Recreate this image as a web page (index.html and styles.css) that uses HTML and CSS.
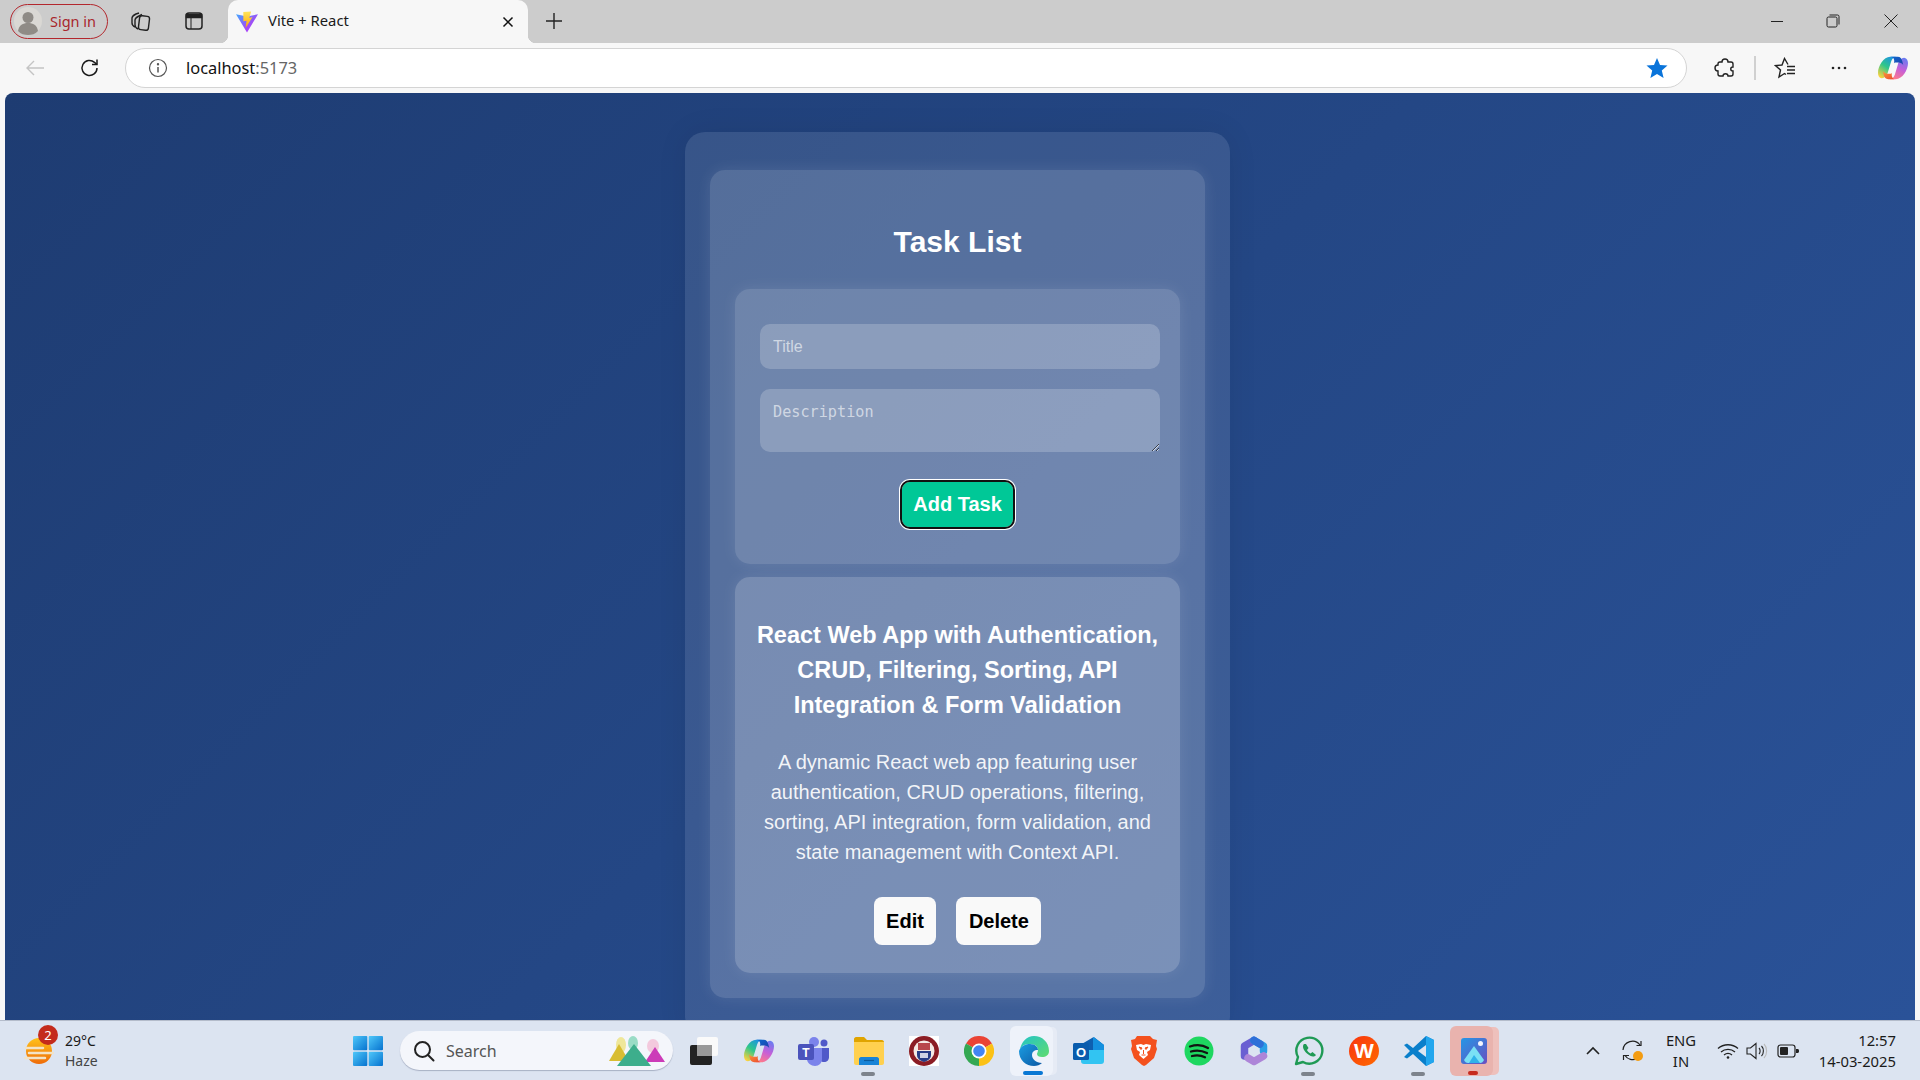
FILE: index.html
```html
<!DOCTYPE html>
<html lang="en">
<head>
    <meta charset="UTF-8">
    <meta name="viewport" content="width=device-width, initial-scale=1.0">
    <title>Vite + React</title>
    <link rel="stylesheet" href="styles.css">
</head>
<body>
    <!-- shared gradients and repeated icons -->
    <svg class="defs" aria-hidden="true">
        <defs>
            <linearGradient id="viteBody" x1="0" y1="0" x2="1" y2="1"><stop offset="0" stop-color="#41a8ff"/><stop offset=".6" stop-color="#a04cf6"/><stop offset="1" stop-color="#bd34fe"/></linearGradient>
            <linearGradient id="viteBolt" x1="0" y1="0" x2="0" y2="1"><stop offset="0" stop-color="#ffe45c"/><stop offset="1" stop-color="#ffa800"/></linearGradient>
            <linearGradient id="copA" x1="0.8" y1="0" x2="0.2" y2="1"><stop offset="0" stop-color="#1b8fe8"/><stop offset=".5" stop-color="#2fc78a"/><stop offset="1" stop-color="#ffd23c"/></linearGradient>
            <linearGradient id="copB" x1="0.7" y1="0" x2="0.3" y2="1"><stop offset="0" stop-color="#6c7bf0"/><stop offset=".5" stop-color="#c65fd8"/><stop offset="1" stop-color="#ff7a8a"/></linearGradient>
            <linearGradient id="copC" x1="0" y1="0" x2="1" y2="1"><stop offset="0" stop-color="#0f6ad0"/><stop offset="1" stop-color="#1b3fa8"/></linearGradient>
            <linearGradient id="copD" x1="0" y1="0" x2="1" y2="1"><stop offset="0" stop-color="#ff9a3c"/><stop offset="1" stop-color="#e8462f"/></linearGradient>
            <linearGradient id="startFill" x1="0" y1="0" x2="1" y2="1"><stop offset="0" stop-color="#4fc8fa"/><stop offset="1" stop-color="#0672cf"/></linearGradient>
            <linearGradient id="edgeFill" x1="0" y1="0" x2="1" y2="1"><stop offset="0" stop-color="#22c3c8"/><stop offset="1" stop-color="#5fdc6f"/></linearGradient>
            <linearGradient id="edgeBlue" x1="0" y1="0" x2="1" y2="1"><stop offset="0" stop-color="#1b9de2"/><stop offset="1" stop-color="#0c59a4"/></linearGradient>
            <linearGradient id="photoBg" x1="0" y1="0" x2="1" y2="1"><stop offset="0" stop-color="#2497e6"/><stop offset="1" stop-color="#6a4fc0"/></linearGradient>
            <linearGradient id="wpsFill" x1="0" y1="0" x2="1" y2="1"><stop offset="0" stop-color="#f8340f"/><stop offset="1" stop-color="#ff6a00"/></linearGradient>
            <linearGradient id="sunFill" x1="0" y1="0" x2="0" y2="1"><stop offset="0" stop-color="#ffc21a"/><stop offset="1" stop-color="#ef6c0a"/></linearGradient>
            <symbol id="copilot" viewBox="0 0 32 32">
                <path d="M13 4h7c-3 0-5 2-6 5l-3 10c-1 4-3 8-7 8-3-.5-4-3-4-6C0 14 6 4 13 4z" fill="url(#copA)"/>
                <path d="M19 28h-7c3 0 5-2 6-5l3-10c1-4 3-8 7-8 3 .5 4 3 4 6 0 7-6 17-13 17z" fill="url(#copB)"/>
                <path d="M13 4h8c3 0 4 2 5 5l1 4c-1-2-3-3-5-3h-4l-1 1c1-3 0-7-4-7z" fill="url(#copC)"/>
                <path d="M19 28h-8c-3 0-4-2-5-5l-1-4c1 2 3 3 5 3h4l1-1c-1 3 0 7 4 7z" fill="url(#copD)"/>
            </symbol>
        </defs>
    </svg>

    <div class="tabstrip">
        <div class="signin">
            <svg class="avatar" viewBox="0 0 28 28"><circle cx="14" cy="14" r="14" fill="#dad8d4"/><circle cx="14" cy="10.500" r="5.500" fill="#8f8b86"/><path d="M4 24c1-6 5-8 10-8s9 2 10 8c-3 3-6 4-10 4s-7-1-10-4z" fill="#8f8b86"/></svg>
            <span>Sign in</span>
        </div>
        <button class="chrome-btn collections" aria-label="Collections">
            <svg width="24" height="24" viewBox="0 0 24 24" fill="none" stroke="#222" stroke-width="1.400"><path d="M6 18c-2-1-3-2-3-4V9c0-2 2-3 4-4l3-1"/><path d="M9 20c-2-1-3-2-3-4v-5c0-2 2-3 4-4l3-1.500"/><rect x="10" y="7" width="10" height="14" rx="2.500" transform="rotate(7 15 14)"/></svg>
        </button>
        <button class="chrome-btn vertical-tabs" aria-label="Vertical tabs">
            <svg width="20" height="20" viewBox="0 0 20 20" fill="none" stroke="#222" stroke-width="1.500"><rect x="2" y="2" width="16" height="16" rx="3"/><path d="M2.500 3.500h15v3h-15z" fill="#222"/><path d="M7 6v12" stroke-width="1"/></svg>
        </button>
        <div class="tab">
            <svg class="favicon" viewBox="0 0 24 24"><path d="M0 3.500l12 2.500 12-2.500-12 20z" fill="url(#viteBody)"/><path d="M8 1l8.500-.5-2 7 3.500-1-7.500 12 1-8-3.500.8z" fill="url(#viteBolt)"/></svg>
            <span class="tab-title">Vite + React</span>
            <svg class="tab-close" width="12" height="12" viewBox="0 0 12 12" stroke="#111" stroke-width="1.500"><path d="M1.500 1.500l9 9M10.500 1.500l-9 9"/></svg>
        </div>
        <button class="chrome-btn new-tab" aria-label="New tab">
            <svg width="18" height="18" viewBox="0 0 18 18" stroke="#222" stroke-width="1.400"><path d="M9 1v16M1 9h16"/></svg>
        </button>
        <div class="window-controls">
            <button class="win-btn" aria-label="Minimize"><svg width="14" height="14" viewBox="0 0 14 14" stroke="#222"><path d="M1 7.500h12"/></svg></button>
            <button class="win-btn" aria-label="Restore"><svg width="14" height="14" viewBox="0 0 14 14" fill="none" stroke="#222"><rect x="1" y="3" width="10" height="10" rx="1.500"/><path d="M3.500 1h8A1.500 1.500 0 0 1 13 2.500v8"/></svg></button>
            <button class="win-btn win-close" aria-label="Close"><svg width="14" height="14" viewBox="0 0 14 14" stroke="#222"><path d="M.5.5l13 13M13.500.5l-13 13"/></svg></button>
        </div>
    </div>

    <div class="toolbar">
        <button class="tool-btn" aria-label="Back">
            <svg width="20" height="20" viewBox="0 0 20 20" fill="none" stroke="#c4c4c4" stroke-width="1.400"><path d="M19 10H2M9 3l-7 7 7 7"/></svg>
        </button>
        <button class="tool-btn reload" aria-label="Refresh">
            <svg width="22" height="22" viewBox="0 0 22 22" fill="none" stroke="#1a1a1a" stroke-width="1.500"><path d="M18 11a7.500 7.500 0 1 1-2.500-5.600L18 7.500"/><path d="M18 2.500v5h-5"/></svg>
        </button>
        <div class="address">
            <svg class="info" width="20" height="20" viewBox="0 0 20 20" fill="none" stroke="#555" stroke-width="1.200"><circle cx="10" cy="10" r="8.500"/><path d="M10 9v5.500" stroke-width="1.500"/><circle cx="10" cy="6.300" r=".6" fill="#555"/></svg>
            <span class="url">localhost<span class="url-port">:5173</span></span>
            <svg class="star" width="22" height="22" viewBox="0 0 22 22"><path d="M11 1l3 7 7.500.6-5.700 4.900 1.800 7.400L11 16.900l-6.600 4 1.800-7.400L.5 8.600 8 8z" fill="#0a74da"/></svg>
        </div>
        <button class="tool-btn ext" aria-label="Extensions">
            <svg width="22" height="22" viewBox="0 0 22 22" fill="none" stroke="#222" stroke-width="1.400"><path d="M8 5c0-4 6-4 6 0h3c1 0 2 1 2 2v3c-3 0-3 4 0 4v3c0 1-1 2-2 2h-3c0-3-5-3-5 0H6c-1 0-2-1-2-2v-3c-4 0-4-6 0-6V7c0-1 1-2 2-2z"/></svg>
        </button>
        <span class="tool-divider"></span>
        <button class="tool-btn" aria-label="Favorites">
            <svg width="22" height="22" viewBox="0 0 22 22" fill="none" stroke="#222" stroke-width="1.400"><path d="M14 7.500L10.500 1.500 8 8l-6.500.6 5 4.400L5 20l5.500-3.500 1.500 1"/><path d="M13 9.500h8M13 13h8M13 16.500h8"/></svg>
        </button>
        <button class="tool-btn dots" aria-label="Settings and more">
            <svg width="16" height="4" viewBox="0 0 16 4" fill="#222"><circle cx="2" cy="2" r="1.300"/><circle cx="8" cy="2" r="1.300"/><circle cx="14" cy="2" r="1.300"/></svg>
        </button>
        <button class="tool-btn copilot-btn" aria-label="Copilot"><svg width="30" height="30"><use href="#copilot"/></svg></button>
    </div>

    <main class="viewport">
        <div class="shell">
            <section class="task-panel">
                <h1 class="panel-title">Task List</h1>

                <form class="task-form">
                    <input class="field" type="text" placeholder="Title">
                    <textarea class="field field-area" placeholder="Description"></textarea>
                    <button class="add-btn" type="button">Add Task</button>
                </form>

                <article class="task-card">
                    <h3 class="task-name">React Web App with Authentication, CRUD, Filtering, Sorting, API Integration &amp; Form Validation</h3>
                    <p class="task-desc">A dynamic React web app featuring user authentication, CRUD operations, filtering, sorting, API integration, form validation, and state management with Context API.</p>
                    <div class="task-actions">
                        <button class="action-btn" type="button">Edit</button>
                        <button class="action-btn" type="button">Delete</button>
                    </div>
                </article>
            </section>
        </div>
    </main>

    <footer class="taskbar">
        <div class="weather">
            <svg class="weather-icon" width="30" height="32" viewBox="0 0 30 32">
                <circle cx="15" cy="16" r="13" fill="url(#sunFill)"/>
                <path d="M2 13h17M5 18h24M1 23h20" stroke="#f3e3c6" stroke-width="2.500" stroke-linecap="round"/>
            </svg>
            <span class="weather-badge">2</span>
            <div class="weather-text">
                <span>29°C</span>
                <span class="weather-sub">Haze</span>
            </div>
        </div>

        <div class="app-slot">
            <svg width="30" height="30" viewBox="0 0 30 30" fill="url(#startFill)"><rect x="0" y="0" width="14.300" height="14.300" rx="1"/><rect x="15.700" y="0" width="14.300" height="14.300" rx="1"/><rect x="0" y="15.700" width="14.300" height="14.300" rx="1"/><rect x="15.700" y="15.700" width="14.300" height="14.300" rx="1"/></svg>
        </div>

        <div class="search">
            <svg width="22" height="22" viewBox="0 0 22 22" fill="none" stroke="#222" stroke-width="2"><circle cx="9.500" cy="9.500" r="7.500"/><path d="M15 15l5.500 5.500" stroke-linecap="round"/></svg>
            <span class="search-label">Search</span>
            <svg class="search-art" width="60" height="32" viewBox="0 0 60 32">
                <ellipse cx="14" cy="10" rx="5" ry="8" fill="#efe79a"/>
                <path d="M2 26L12 9l10 17z" fill="#d8bd32"/>
                <ellipse cx="46" cy="11" rx="6" ry="7" fill="#f3c9dd"/>
                <path d="M38 27l10-15 10 15z" fill="#cc3bb8"/>
                <ellipse cx="26" cy="8" rx="5" ry="7" fill="#9adcc6"/>
                <path d="M10 31L27 9l17 22z" fill="#3dae8c"/>
            </svg>
        </div>

        <div class="app-slot">
            <svg width="30" height="30" viewBox="0 0 30 30"><rect x="1" y="9" width="22" height="20" rx="2" fill="#222"/><rect x="8" y="1" width="21" height="19" rx="2" fill="#fafafa"/><rect x="8" y="9" width="15" height="11" fill="#999"/></svg>
        </div>
        <div class="app-slot"><svg width="30" height="30"><use href="#copilot"/></svg></div>
        <div class="app-slot">
            <svg width="32" height="30" viewBox="0 0 32 30">
                <circle cx="16" cy="6" r="5" fill="#7b83eb"/><circle cx="26" cy="7" r="3.500" fill="#5059c9"/>
                <path d="M21 12h10v9c0 3-2 5-5 5s-5-2-5-5z" fill="#5059c9"/>
                <path d="M9 12h15v11c0 4-3 7-7 7s-8-3-8-7z" fill="#7b83eb"/>
                <rect x="0" y="8" width="16" height="16" rx="2" fill="#4b53bc"/>
                <text class="icon-letter" x="8" y="21" font-size="12" text-anchor="middle">T</text>
            </svg>
        </div>
        <div class="app-slot has-dot">
            <svg width="30" height="28" viewBox="0 0 30 28">
                <path d="M0 2c0-1 1-2 2-2h8l3 3h15c1 0 2 1 2 2v3H0z" fill="#e0a400"/>
                <path d="M0 5h30v21c0 1-1 2-2 2H2c-1 0-2-1-2-2z" fill="#ffd04f"/>
                <path d="M5 22c0-1 1-2 2-2h16c1 0 2 1 2 2v6H5z" fill="#1883d7"/>
                <path d="M10 23.500h10" stroke="#0b5a9c" stroke-width="1.200"/>
            </svg>
        </div>
        <div class="app-slot">
            <svg width="30" height="30" viewBox="0 0 30 30">
                <rect width="30" height="30" fill="#fff"/>
                <circle cx="15" cy="15" r="15" fill="#8b1c24"/>
                <circle cx="15" cy="15" r="10.500" fill="#f4e9e4"/>
                <path d="M9 7h12v7H9z" fill="#b8474c"/>
                <path d="M8 15h14v4c0 4-4 6-7 7-3-1-7-3-7-7z" fill="#273c86"/>
                <path d="M11 17h8v5h-8z" fill="#cfd2e4"/>
            </svg>
        </div>
        <div class="app-slot">
            <svg width="30" height="30" viewBox="0 0 30 30">
                <path d="M15 15L2 7.500A15 15 0 0 1 28 7.500z" fill="#ea4335"/>
                <path d="M15 15L28 7.500A15 15 0 0 1 15 30z" fill="#fbc116"/>
                <path d="M15 15L15 30A15 15 0 0 1 2 7.500z" fill="#34a853"/>
                <circle cx="15" cy="15" r="7.500" fill="#fff"/><circle cx="15" cy="15" r="5.800" fill="#4285f4"/>
            </svg>
        </div>
        <div class="app-slot slot-edge">
            <svg width="30" height="30" viewBox="0 0 30 30">
                <path d="M1 14C2 6 8 0 15 0c8 0 15 6 15 15 0 4-3 6-7 6-3 0-5-1-5-3 0-1 1-2 1-4 0-4-4-6-8-6C6 8 2 10 1 14z" fill="url(#edgeFill)"/>
                <path d="M0 15c2-5 6-7 11-7 5 0 8 3 8 6-4 0-6 2-6 5 0 4 4 8 10 8-2 2-5 3-8 3C7 30 0 24 0 15z" fill="url(#edgeBlue)"/>
            </svg>
        </div>
        <div class="app-slot">
            <svg width="31" height="28" viewBox="0 0 31 28">
                <path d="M7 8l12-7c1-.6 2-.6 3 0l9 7v5H7z" fill="#0e5fb0"/>
                <path d="M20 .5c1-.3 1.500-.2 2 .5l9 7v5H20z" fill="#1490df"/>
                <path d="M8 13h23v11c0 2-1 3-3 3H11c-2 0-3-1-3-3z" fill="#32c4f2"/>
                <rect x="0" y="6" width="16" height="17" rx="1.500" fill="#0a5cad"/>
                <text class="icon-letter" x="8" y="19.500" font-size="13" text-anchor="middle">O</text>
            </svg>
        </div>
        <div class="app-slot">
            <svg width="27" height="30" viewBox="0 0 27 30">
                <path d="M7 0h13l3 3 4 1-1 6 1 3-3 9-8 7-2 1-2-1-8-7-3-9 1-3-1-6 4-1z" fill="#f4511e"/>
                <path d="M6 9l5-1 2.500 1 2.500-1 5 1-1 5-3 2 1 3-4.500 4L9 19l1-3-3-2z" fill="#fff"/>
                <path d="M9 11l3 1-1 1.500zM18 11l-3 1 1 1.500zM13.500 14v4M11.500 19h4" stroke="#f4511e" stroke-width="1" fill="#f4511e"/>
            </svg>
        </div>
        <div class="app-slot">
            <svg width="30" height="30" viewBox="0 0 30 30">
                <circle cx="15" cy="15" r="14.500" fill="#1ed760"/>
                <path d="M6 10.500c6-2 13-1.500 18 1.500M7 15.500c5-1.500 11-1 16 1.500M8 20c4-1 9-.8 13 1.300" fill="none" stroke="#121212" stroke-width="2.300" stroke-linecap="round"/>
            </svg>
        </div>
        <div class="app-slot">
            <svg width="28" height="30" viewBox="0 0 28 30" fill="none" stroke-width="7.500" stroke-linejoin="round" stroke-linecap="round">
                <path d="M4.500 20V10l9.500-5.500" stroke="#6a5fd2"/>
                <path d="M14 4.500l9.500 5.500v5" stroke="#2a9ee6"/>
                <path d="M23.500 20l-9.500 5.500L8 22" stroke="#ad85d8"/>
                <path d="M14 4.500l6 3.500" stroke="#2e6fd8"/>
            </svg>
        </div>
        <div class="app-slot has-dot">
            <svg width="30" height="30" viewBox="0 0 30 30" fill="none">
                <path d="M2 28l2-7A13 13 0 1 1 9 26z" stroke="#1f9a55" stroke-width="2.400" stroke-linejoin="round"/>
                <path d="M10 8c-2 2-1 6 3 9.500s7 4 9 1.500l-3.500-3-2 1.500c-1.500-.7-3-2.300-3.500-3.500l1.500-2L12 8z" fill="#1f9a55"/>
            </svg>
        </div>
        <div class="app-slot">
            <svg width="30" height="30" viewBox="0 0 30 30">
                <circle cx="15" cy="15" r="15" fill="url(#wpsFill)"/>
                <text class="icon-letter" x="15" y="22" font-size="21" text-anchor="middle">W</text>
            </svg>
        </div>
        <div class="app-slot has-dot">
            <svg width="30" height="30" viewBox="0 0 30 30">
                <path d="M22 0l8 4v22l-8 4-13-12-6 4.500L0 21l6-6-6-6 3-1.500 6 4.500z" fill="#0a7fcb"/>
                <path d="M22 0l8 4v22l-8 4z" fill="#22a6ee"/>
                <path d="M22 9l-8 6 8 6z" fill="#dde5f2"/>
            </svg>
        </div>
        <div class="app-slot slot-photos">
            <svg width="26" height="26" viewBox="0 0 26 26">
                <rect width="26" height="26" rx="3" fill="url(#photoBg)"/>
                <circle cx="19.500" cy="5.500" r="2.500" fill="#f2f4ff"/>
                <path d="M3 22L13 8l10 14c-1 2-2 3-4 3H7c-2 0-3-1-4-3z" fill="#7ae0f5"/>
                <path d="M8 25l5-8 6 8z" fill="#2fb2ea"/>
            </svg>
        </div>

        <div class="tray">
            <span class="tray-slot tray-caret">
                <svg width="16" height="10" viewBox="0 0 16 10" fill="none" stroke="#222" stroke-width="1.600"><path d="M2 8l6-6 6 6"/></svg>
            </span>
            <span class="tray-slot tray-sync">
                <svg width="24" height="24" viewBox="0 0 24 24" fill="none" stroke="#222" stroke-width="1.200"><path d="M2 11A9.500 9.500 0 0 1 19 6"/><path d="M20 2v4.500h-4.500"/><path d="M16 19.500A9 9 0 0 1 4 16.500"/><path d="M2.500 21v-4.500H8"/><circle cx="17" cy="17" r="5" fill="#f39c12" stroke="none"/></svg>
            </span>
            <span class="tray-lang"><span>ENG</span><span>IN</span></span>
            <span class="tray-slot tray-wifi">
                <svg width="22" height="18" viewBox="0 0 22 18" fill="none" stroke="#222" stroke-width="1.300"><path d="M1 6.500c5.500-5 14.500-5 20 0M4 10c4-3.500 10-3.500 14 0M7 13c2.500-2 5.500-2 8 0"/><circle cx="11" cy="15.500" r="1.300" fill="#222" stroke="none"/></svg>
            </span>
            <span class="tray-slot">
                <svg width="22" height="18" viewBox="0 0 22 18" fill="none" stroke="#222" stroke-width="1.100"><path d="M1 6h3.500L10 1.500v15L4.500 12H1z"/><path d="M13 6c1.500 1.500 1.500 4.500 0 6M15.500 4c2.500 2.500 2.500 7.500 0 10"/><path d="M18 2c3.500 3.500 3.500 10.500 0 14" stroke="#bbb"/></svg>
            </span>
            <span class="tray-slot tray-battery">
                <svg width="22" height="14" viewBox="0 0 22 14"><rect x="1" y="1" width="17" height="12" rx="2.500" fill="none" stroke="#222" stroke-width="1.200"/><rect x="3" y="3" width="8" height="8" rx="1" fill="#222"/><path d="M19 5h1.500c.8 0 1.500.7 1.500 1.500v1c0 .8-.7 1.500-1.500 1.500H19z" fill="#222"/></svg>
            </span>
            <span class="clock"><span>12:57</span><span>14-03-2025</span></span>
        </div>
    </footer>
</body>
</html>
```

FILE: styles.css
```css
/* General Styles */
* {
    margin: 0;
    padding: 0;
    box-sizing: border-box;
}

html, body {
    height: 100%;
    overflow: hidden;
}

body {
    display: flex;
    flex-direction: column;
    height: 1080px;
    background-color: #f7f7f7;
    font-family: "Liberation Sans", Arial, sans-serif;
}

button {
    border: none;
    background: none;
    font-family: inherit;
}

.defs {
    position: absolute;
    width: 0;
    height: 0;
}

/* Browser tab strip */
.tabstrip {
    display: flex;
    align-items: center;
    flex: 0 0 43px;
    padding-bottom: 1px;
    background-color: #cccccc;
    font-family: "Noto Sans", sans-serif;
}

.signin {
    display: flex;
    align-items: center;
    gap: 8px;
    width: 98px;
    height: 35px;
    margin-left: 10px;
    padding-left: 3px;
    padding-bottom: 1px;
    border: 1.500px solid #b3272d;
    border-radius: 18px;
    color: #a8262c;
    font-size: 14.500px;
}

.avatar {
    width: 28px;
    height: 28px;
}

.chrome-btn {
    display: flex;
    align-items: center;
    justify-content: center;
    width: 44px;
    height: 36px;
}

.collections {
    margin-left: 11px;
}

.vertical-tabs {
    margin-left: 9px;
}

.tab {
    position: relative;
    display: flex;
    align-items: center;
    align-self: flex-end;
    width: 300px;
    height: 43px;
    margin-left: 12px;
    margin-bottom: -1px;
    padding-left: 8px;
    border-radius: 10px 10px 0 0;
    background-color: #f7f7f7;
    color: #1a1a1a;
    font-size: 14.800px;
}

.tab::before,
.tab::after {
    content: "";
    position: absolute;
    bottom: 0;
    width: 8px;
    height: 8px;
}

.tab::before {
    left: -8px;
    background: radial-gradient(circle at 0 0, #cccccc 8px, #f7f7f7 8.500px);
}

.tab::after {
    right: -8px;
    background: radial-gradient(circle at 100% 0, #cccccc 8px, #f7f7f7 8.500px);
}

.favicon {
    width: 22px;
    height: 22px;
}

.tab-title {
    margin-left: 10px;
    padding-bottom: 4px;
}

.tab-close {
    margin-left: auto;
    margin-right: 14px;
}

.new-tab {
    margin-left: 4px;
}

.window-controls {
    display: flex;
    margin-left: auto;
    margin-right: 1px;
}

.win-btn {
    display: flex;
    align-items: center;
    justify-content: center;
    width: 56px;
    height: 36px;
}

.win-close {
    margin-left: 2px;
}

/* Browser toolbar */
.toolbar {
    display: flex;
    align-items: center;
    flex: 0 0 50px;
    padding: 0 5px 0 13px;
    background-color: #f7f7f7;
    font-family: "Noto Sans", sans-serif;
}

.tool-btn {
    display: flex;
    align-items: center;
    justify-content: center;
    width: 44px;
    height: 36px;
}

.reload {
    margin-left: 11px;
}

.address {
    display: flex;
    align-items: center;
    flex: 1;
    height: 40px;
    margin-left: 13px;
    padding-left: 22px;
    border: 1.500px solid #d4d4d4;
    border-radius: 20px;
    background-color: #ffffff;
}

.url {
    margin-left: 18px;
    padding-bottom: 2px;
    color: #111;
    font-size: 16.400px;
}

.url-port {
    color: #666;
}

.star {
    margin-left: auto;
    margin-right: 18px;
}

.ext {
    margin-left: 16px;
}

.tool-divider {
    width: 2px;
    height: 24px;
    margin: 0 7px;
    background-color: #d0d0d0;
}

.dots {
    margin-left: 10px;
}

.copilot-btn {
    margin-left: 10px;
}

/* Page area */
.viewport {
    flex: 1;
    margin: 0 5px;
    border-radius: 8px 8px 0 0;
    overflow: hidden;
    background: linear-gradient(135deg, #1e3c72, #2a5298);
}

/* outer glass box, runs on under the taskbar */
.shell {
    width: 545px;
    margin: 39px 0 0 680px;
    padding: 38px 25px;
    border-radius: 20px;
    background: rgba(255, 255, 255, 0.1);
    box-shadow: 0 0 30px rgba(0, 0, 0, 0.08);
}

.task-panel {
    padding: 55px 25px 25px;
    border-radius: 15px;
    background: rgba(255, 255, 255, 0.15);
    box-shadow: 0 0 15px rgba(255, 255, 255, 0.1);
}

.panel-title {
    margin-bottom: 30px;
    color: #ffffff;
    font-size: 30px;
    line-height: 34px;
    font-weight: 700;
    text-align: center;
}

/* Task form and card */
.task-form,
.task-card {
    border-radius: 15px;
    box-shadow: 0 0 15px rgba(255, 255, 255, 0.1);
}

.task-form {
    display: flex;
    flex-direction: column;
    align-items: center;
    padding: 35px 0 37px;
    background: rgba(255, 255, 255, 0.15);
}

.field {
    display: block;
    width: 400px;
    height: 45px;
    margin: 0 0 20px 5px;
    padding: 0 13px;
    border: none;
    border-radius: 10px;
    background: rgba(255, 255, 255, 0.2);
    color: #ffffff;
    font-family: "Liberation Sans", Arial, sans-serif;
    font-size: 16px;
    outline: none;
}

.field::placeholder {
    color: rgba(255, 255, 255, 0.6);
}

.field-area {
    height: 63px;
    padding-top: 14px;
    margin-bottom: 30px;
    font-family: "DejaVu Sans Mono", monospace;
    font-size: 15.200px;
}

.add-btn {
    width: 111px;
    height: 45px;
    border-radius: 8px;
    background-color: #00c897;
    color: #ffffff;
    font-size: 20px;
    font-weight: 700;
    outline: 2px solid #111111;
    box-shadow: 0 0 0 3px #ffffff;
}

.task-card {
    margin-top: 13px;
    padding: 41px 20px 28px;
    background: rgba(255, 255, 255, 0.2);
    color: #ffffff;
    text-align: center;
}

.task-name {
    font-size: 23.500px;
    line-height: 35px;
    font-weight: 700;
}

.task-desc {
    margin-top: 24px;
    color: rgba(255, 255, 255, 0.92);
    font-size: 20px;
    line-height: 30px;
}

.task-actions {
    display: flex;
    justify-content: center;
    gap: 20px;
    margin-top: 30px;
}

.action-btn {
    height: 48px;
    padding: 0 12.500px;
    border-radius: 8px;
    background-color: #f9f9f9;
    color: #000000;
    font-size: 20px;
    font-weight: 700;
}

/* Windows taskbar */
.taskbar {
    position: relative;
    display: flex;
    align-items: center;
    flex: 0 0 60px;
    border-top: 1px solid #b4bccb;
    background-color: #dce4f1;
    color: #1a1a1a;
    font-family: "Noto Sans", sans-serif;
}

.weather {
    position: relative;
    display: flex;
    align-items: center;
    width: 340px;
    padding-left: 24px;
}

.weather-badge {
    position: absolute;
    left: 38px;
    top: -6px;
    width: 20px;
    height: 20px;
    border-radius: 50%;
    background-color: #c42b1c;
    color: #ffffff;
    font-size: 13px;
    line-height: 20px;
    text-align: center;
}

.weather-text {
    display: flex;
    flex-direction: column;
    margin-left: 11px;
    font-size: 14px;
    line-height: 20px;
}

.weather-sub {
    color: #444;
}

.app-slot {
    position: relative;
    display: flex;
    align-items: center;
    justify-content: center;
    width: 55px;
    height: 50px;
}

.icon-letter {
    fill: #ffffff;
    font-family: "Liberation Sans", sans-serif;
    font-weight: 700;
}

.has-dot::after {
    content: "";
    position: absolute;
    left: 20px;
    bottom: 0;
    width: 14px;
    height: 4px;
    border-radius: 2px;
    background-color: #7d838c;
}

.slot-edge::before,
.slot-photos::before {
    content: "";
    position: absolute;
    left: 3.500px;
    top: 0;
    width: 43px;
    height: 50px;
    border-radius: 6px;
}

.slot-edge::before {
    background-color: #eef2fa;
    box-shadow: 5px 0 0 -1px #e6ebf5;
}

.slot-photos::before {
    background-color: #e9b3ae;
    box-shadow: 7px 0 0 -1px #eec0bc;
}

.slot-edge svg,
.slot-photos svg {
    position: relative;
}

.slot-edge::after,
.slot-photos::after {
    content: "";
    position: absolute;
    bottom: 1px;
    height: 4px;
    border-radius: 2px;
}

.slot-edge::after {
    left: 17px;
    width: 20px;
    background-color: #0a78d4;
}

.slot-photos::after {
    left: 22px;
    width: 10px;
    background-color: #c62a1e;
}

.search {
    display: flex;
    align-items: center;
    width: 273px;
    height: 39px;
    margin: 0 3px 0 5px;
    padding-left: 13px;
    border-radius: 20px;
    background-color: #f4f6fb;
    box-shadow: 0 1px 1px rgba(90, 100, 130, 0.4);
}

.search-label {
    margin-left: 11px;
    color: #555;
    font-size: 16px;
}

.search-art {
    margin-left: auto;
    margin-right: 6px;
}

.tray {
    display: flex;
    align-items: center;
    width: 318px;
    margin-left: auto;
    margin-right: 24px;
    font-size: 14.800px;
}

.tray-slot {
    display: flex;
    align-items: center;
    justify-content: center;
    width: 28px;
}

.tray-caret {
    width: 30px;
}

.tray-sync {
    width: 50px;
}

.tray-lang,
.clock {
    display: flex;
    flex-direction: column;
    line-height: 21px;
}

.tray-lang {
    width: 46px;
    align-items: center;
}

.tray-wifi {
    margin-left: 10px;
    margin-right: 1px;
}

.tray-battery {
    margin-left: 3px;
}

.clock {
    flex: 1;
    align-items: flex-end;
}
```
